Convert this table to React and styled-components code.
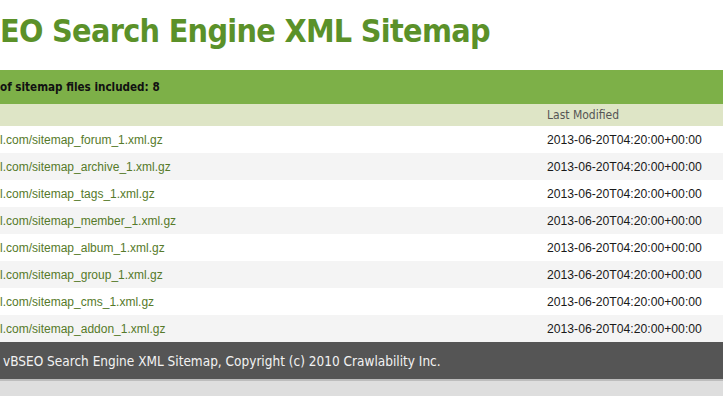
import React from 'react';
import styled, { createGlobalStyle } from 'styled-components';

const GlobalStyle = createGlobalStyle`
  html, body {
    margin: 0;
    padding: 0;
    background: #dedede;
  }
  body {
    font-family: "Liberation Sans", Arial, sans-serif;
  }
`;

const Page = styled.div`
  width: 723px;
  overflow: hidden;
  background: #fff;
`;

const Title = styled.h1`
  margin: 0;
  height: 70px;
  padding-top: 11px;
  box-sizing: border-box;
  font-family: "DejaVu Sans Condensed", "DejaVu Sans", sans-serif;
  font-weight: bold;
  font-size: 32px;
  letter-spacing: -0.7px;
  line-height: 40px;
  color: #5b9129;
  white-space: nowrap;
`;

const Summary = styled.div`
  height: 34px;
  display: flex;
  align-items: center;
  background: #7db048;
  font-family: "DejaVu Sans Condensed", "DejaVu Sans", sans-serif;
  font-weight: bold;
  font-size: 11.6px;
  color: #111;
  white-space: nowrap;
`;

const Row = styled.div`
  display: grid;
  grid-template-columns: 1fr 176px;
  align-items: center;
  height: ${p => (p.head ? 22 : 27)}px;
  background: ${p => (p.head ? '#dee5c6' : p.odd ? '#f4f4f4' : '#fff')};
  font-size: 12px;
  white-space: nowrap;
`;

const HeadCell = styled.span`
  font-family: "DejaVu Sans Condensed", "DejaVu Sans", sans-serif;
  font-size: 12px;
  color: #555;
`;

const Link = styled.a`
  color: #567a2a;
  text-decoration: none;
`;

const Date = styled.span`
  color: #1a1a1a;
  font-size: 12.2px;
`;

const Footer = styled.div`
  height: 37px;
  display: flex;
  align-items: center;
  padding-left: 3px;
  background: #555;
  border-bottom: 2px solid #bdbdbd;
  font-family: "DejaVu Sans Condensed", "DejaVu Sans", sans-serif;
  font-size: 13.5px;
  color: #f2f2f2;
  white-space: nowrap;
`;

const files = ['forum', 'archive', 'tags', 'member', 'album', 'group', 'cms', 'addon'];

export default function App() {
  return (
    <>
      <GlobalStyle />
      <Page>
        <Title>EO Search Engine XML Sitemap</Title>
        <Summary>of sitemap files included: 8</Summary>
        <Row head>
          <span />
          <HeadCell>Last Modified</HeadCell>
        </Row>
        {files.map((f, i) => (
          <Row key={f} odd={i % 2 === 1}>
            <Link href="#">l.com/sitemap_{f}_1.xml.gz</Link>
            <Date>2013-06-20T04:20:00+00:00</Date>
          </Row>
        ))}
        <Footer>vBSEO Search Engine XML Sitemap, Copyright (c) 2010 Crawlability Inc.</Footer>
      </Page>
    </>
  );
}
